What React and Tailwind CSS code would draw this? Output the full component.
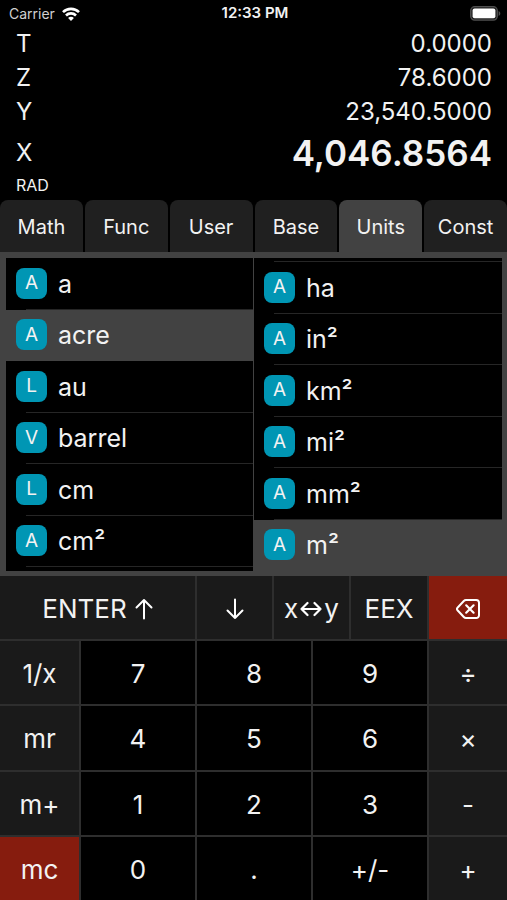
import React, { useState } from 'react';

// --- Data ---

const STACK = [
  { name: 'T', value: '0.0000' },
  { name: 'Z', value: '78.6000' },
  { name: 'Y', value: '23,540.5000' },
];

const TABS = ['Math', 'Func', 'User', 'Base', 'Units', 'Const'];

const FROM_UNITS = [
  { kind: 'A', name: 'a' },
  { kind: 'A', name: 'acre' },
  { kind: 'L', name: 'au' },
  { kind: 'V', name: 'barrel' },
  { kind: 'L', name: 'cm' },
  { kind: 'A', name: 'cm²' },
];

const TO_UNITS = [
  { kind: 'A', name: 'ha' },
  { kind: 'A', name: 'in²' },
  { kind: 'A', name: 'km²' },
  { kind: 'A', name: 'mi²' },
  { kind: 'A', name: 'mm²' },
  { kind: 'A', name: 'm²' },
];

const KEYS = [
  ['1/x', '7', '8', '9', '÷'],
  ['mr', '4', '5', '6', '×'],
  ['m+', '1', '2', '3', '-'],
  ['mc', '0', '.', '+/-', '+'],
];

// --- Icons ---

function WifiIcon() {
  return (
    <svg viewBox="0 0 18 14" className="w-[18px] h-[14px]" fill="none" stroke="white" strokeWidth="2.6">
      <path d="M1 5.2a11.3 11.3 0 0 1 16 0" />
      <path d="M4 8.5a7 7 0 0 1 10 0" />
      <path d="M9 14 6.100 11a4 4 0 0 1 5.800 0Z" fill="white" stroke="none" />
    </svg>
  );
}

function BatteryIcon() {
  return (
    <svg viewBox="0 0 31 15" className="w-[31px] h-[15px]">
      <rect x="0.7" y="0.7" width="26.6" height="13.4" rx="4" fill="#222" stroke="#505050" strokeWidth="1.3" />
      <rect x="2.6" y="2.6" width="22.8" height="9.6" rx="2" fill="white" />
      <path d="M28.6 5v5c1-.4 1.7-1.3 1.7-2.5S29.6 5.4 28.6 5Z" fill="#505050" />
    </svg>
  );
}

function ArrowUp() {
  return (
    <svg viewBox="0 0 18 22" className="w-[18px] h-[22px]" fill="none" stroke="white" strokeWidth="2" strokeLinecap="round" strokeLinejoin="round">
      <path d="M9 20.5V2M1.500 9.500 9 2l7.500 7.500" />
    </svg>
  );
}

function ArrowDown() {
  return (
    <svg viewBox="0 0 18 22" className="w-[18px] h-[22px]" fill="none" stroke="white" strokeWidth="2" strokeLinecap="round" strokeLinejoin="round">
      <path d="M9 1.500V20M1.500 12.500 9 20l7.500-7.500" />
    </svg>
  );
}

function ArrowSwap() {
  return (
    <svg viewBox="0 0 22 16" className="w-[22px] h-[16px]" fill="none" stroke="white" strokeWidth="2.2" strokeLinecap="round" strokeLinejoin="round">
      <path d="M1.500 8h19M7.500 2l-6 6 6 6M14.500 2l6 6-6 6" />
    </svg>
  );
}

function BackspaceIcon() {
  return (
    <svg viewBox="0 0 24 20" className="w-6 h-5" fill="none" stroke="white" strokeWidth="2" strokeLinecap="round" strokeLinejoin="round">
      <path d="M10 1h10.200A2.800 2.800 0 0 1 23 3.800v12.400a2.800 2.800 0 0 1-2.800 2.800H10a3 3 0 0 1-2.200-1L1.500 11.200a1.700 1.700 0 0 1 0-2.400L7.800 2A3 3 0 0 1 10 1Z" />
      <path d="m10.200 6.300 7.400 7.400M17.600 6.300l-7.400 7.400" strokeWidth="2.200" />
    </svg>
  );
}

// --- Components ---

function StatusBar() {
  return (
    <header className="grid grid-cols-3 items-center h-[27px] pl-[9px] pr-[6px] text-[14px]">
      <div className="flex items-center gap-[7px] text-[#d0d0d0]">
        Carrier
        <WifiIcon />
      </div>
      <div className="text-center text-[15px] font-semibold whitespace-nowrap">12:33 PM</div>
      <div className="flex justify-end">
        <BatteryIcon />
      </div>
    </header>
  );
}

function StackDisplay() {
  return (
    <section className="pl-4 pr-[15px] h-[173px]">
      {STACK.map((row) => (
        <div key={row.name} className="flex justify-between items-center h-[34px] text-[24px]">
          <span>{row.name}</span>
          <span>{row.value}</span>
        </div>
      ))}
      <div className="flex justify-between items-center h-12 text-[24px]">
        <span>X</span>
        <span className="text-[35px] font-semibold">4,046.8564</span>
      </div>
      <div className="text-[16px] leading-4">RAD</div>
    </section>
  );
}

function TabBar({ active, onChange }) {
  return (
    <div role="tablist" className="grid grid-cols-6 gap-[2px] h-[52px]">
      {TABS.map((tab) => (
        <button
          key={tab}
          role="tab"
          aria-selected={tab === active}
          onClick={() => onChange(tab)}
          className={`rounded-t-lg pt-[2px] text-[20px] ${tab === active ? 'bg-[#424242]' : 'bg-[#202020]'}`}
        >
          {tab}
        </button>
      ))}
    </div>
  );
}

function UnitList({ label, units, selected, onSelect }) {
  return (
    <div role="listbox" aria-label={label} className="grid grid-rows-6 h-[309px]">
      {units.map((unit) => {
        const isSelected = unit.name === selected;
        return (
          <button
            key={unit.name}
            role="option"
            aria-selected={isSelected}
            onClick={() => onSelect(unit.name)}
            className={`flex flex-col text-left ${isSelected ? 'bg-[#424242]' : ''}`}
          >
            <span className="flex-1 flex items-center gap-[11px] pl-[10px] text-[25px]">
              <span className="flex items-center justify-center size-[31px] rounded-lg bg-[#0096b4] text-[19px]">
                {unit.kind}
              </span>
              <span className="pt-[2px]">{unit.name}</span>
            </span>
            <span className={`self-stretch ml-5 h-px ${isSelected ? '' : 'bg-[#262626]'}`}></span>
          </button>
        );
      })}
    </div>
  );
}

function UnitsPanel() {
  const [from, setFrom] = useState('acre');
  const [to, setTo] = useState('m²');

  return (
    <section className="grid grid-cols-[247fr_248fr] gap-px bg-[#424242] pl-[6px] pr-[5px] pt-[6px] pb-[5px]">
      <div className="bg-black pb-1">
        <UnitList label="From unit" units={FROM_UNITS} selected={from} onSelect={setFrom} />
      </div>
      <div className="bg-black pt-1">
        <div className="ml-5 h-px -mt-px bg-[#262626]"></div>
        <UnitList label="To unit" units={TO_UNITS} selected={to} onSelect={setTo} />
      </div>
    </section>
  );
}

function Key({ label, tone, children }) {
  const tones = {
    digit: 'bg-black',
    action: 'bg-[#1a1a1a]',
    danger: 'bg-[#861c0e]',
  };
  return (
    <button aria-label={label} className={`flex items-center justify-center pt-[2px] text-[26px] ${tones[tone]}`}>
      {children}
    </button>
  );
}

function keyTone(key, column) {
  if (key === 'mc') return 'danger';
  return column === 0 || column === 4 ? 'action' : 'digit';
}

function Keypad() {
  return (
    <section className="flex-1 grid grid-rows-5 gap-[2px] bg-[#2e2e2e]">
      <div className="grid grid-cols-[195fr_75fr_75fr_76fr_78fr] gap-[2px]">
        <Key label="Enter" tone="action">
          <span className="flex items-center gap-2">
            ENTER <ArrowUp />
          </span>
        </Key>
        <Key label="Roll down" tone="action">
          <ArrowDown />
        </Key>
        <Key label="Swap x and y" tone="action">
          <span className="flex items-center gap-[2px]">
            x<ArrowSwap />y
          </span>
        </Key>
        <Key label="Enter exponent" tone="action">EEX</Key>
        <Key label="Backspace" tone="danger">
          <BackspaceIcon />
        </Key>
      </div>
      {KEYS.map((row) => (
        <div key={row[0]} className="grid grid-cols-[79fr_114fr_114fr_114fr_78fr] gap-[2px]">
          {row.map((key, column) => (
            <Key key={key} label={key} tone={keyTone(key, column)}>
              {key}
            </Key>
          ))}
        </div>
      ))}
    </section>
  );
}

export default function App() {
  const [tab, setTab] = useState('Units');

  return (
    <main className="flex flex-col min-h-screen w-full bg-black text-[#f2f2f2] font-['Inter','Liberation_Sans',sans-serif]">
      <StatusBar />
      <StackDisplay />
      <TabBar active={tab} onChange={setTab} />
      <UnitsPanel />
      <Keypad />
    </main>
  );
}
